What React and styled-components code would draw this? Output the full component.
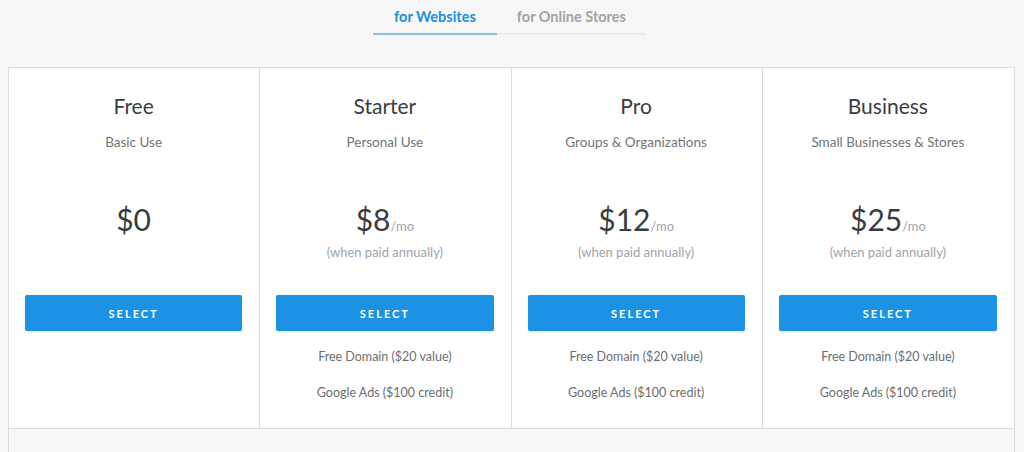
import styled, { createGlobalStyle } from "styled-components";

const plans = [
  { name: "Free", use: "Basic Use", price: "$0", monthly: false, features: [] },
  {
    name: "Starter",
    use: "Personal Use",
    price: "$8",
    monthly: true,
    features: ["Free Domain ($20 value)", "Google Ads ($100 credit)"],
  },
  {
    name: "Pro",
    use: "Groups & Organizations",
    price: "$12",
    monthly: true,
    features: ["Free Domain ($20 value)", "Google Ads ($100 credit)"],
  },
  {
    name: "Business",
    use: "Small Businesses & Stores",
    price: "$25",
    monthly: true,
    features: ["Free Domain ($20 value)", "Google Ads ($100 credit)"],
  },
];

const GlobalStyle = createGlobalStyle`
  body {
    margin: 0;
    background: #f7f7f7;
    font-family: Lato, "Open Sans", sans-serif;
    overflow: hidden;
  }
`;

const App = () => {
  return (
    <>
      <GlobalStyle />
      <Page>
        <Tabs>
          <Tab $active>for Websites</Tab>
          <Tab>for Online Stores</Tab>
        </Tabs>
        <Table>
          <PlanGrid>
            {plans.map((plan) => (
              <Plan key={plan.name}>
                <PlanName>{plan.name}</PlanName>
                <PlanUse>{plan.use}</PlanUse>
                <PriceBlock>
                  <Price>
                    {plan.price}
                    {plan.monthly && <PerMonth>/mo</PerMonth>}
                  </Price>
                  {plan.monthly && <PriceNote>(when paid annually)</PriceNote>}
                </PriceBlock>
                <SelectButton>Select</SelectButton>
                <Features>
                  {plan.features.map((f) => (
                    <Feature key={f}>{f}</Feature>
                  ))}
                </Features>
              </Plan>
            ))}
          </PlanGrid>
          <ExtraRow />
        </Table>
      </Page>
    </>
  );
};

const Page = styled.div`
  padding: 0 9px 0 8px;
`;

const Tabs = styled.div`
  display: flex;
  justify-content: center;
  padding-right: 4px;
  margin-bottom: 32px;
`;

const Tab = styled.div`
  height: 34px;
  padding: 0 ${(p) => (p.$active ? "21px" : "20px")};
  display: flex;
  align-items: center;
  padding-bottom: 1px;
  box-sizing: border-box;
  font-size: 14.5px;
  font-weight: 700;
  color: ${(p) => (p.$active ? "#1a8fe0" : "#a3a3a3")};
  border-bottom: ${(p) => (p.$active ? "2px solid #86c3ef" : "2px solid #ececec")};
  margin-top: 1px;
`;

const Table = styled.div`
  border: 1px solid #dcdcdc;
  border-bottom: none;
`;

const PlanGrid = styled.div`
  display: grid;
  grid-template-columns: repeat(4, 1fr);
  background: #fff;
  border-bottom: 1px solid #dcdcdc;
`;

const Plan = styled.div`
  display: flex;
  flex-direction: column;
  align-items: center;
  padding: 25px 17px 26px 16px;
  text-align: center;
  border-right: 1px solid #dcdcdc;

  &:last-child {
    border-right: none;
  }
`;

const PlanName = styled.div`
  font-size: 21px;
  line-height: 26px;
  color: #3a3d40;
`;

const PlanUse = styled.div`
  margin-top: 14px;
  font-size: 13.5px;
  line-height: 18px;
  color: #707478;
`;

const PriceBlock = styled.div`
  margin-top: 50px;
  height: 60px;
`;

const Price = styled.div`
  font-size: 30px;
  line-height: 36px;
  color: #3a3d40;
`;

const PerMonth = styled.span`
  font-size: 13px;
  line-height: 1;
  color: #a0a4a8;
`;

const PriceNote = styled.div`
  margin-top: 6px;
  font-size: 13px;
  line-height: 18px;
  color: #a0a4a8;
`;

const SelectButton = styled.button`
  margin-top: 34px;
  width: 100%;
  height: 36px;
  border: none;
  border-radius: 2px;
  background: #1b92e3;
  box-shadow: 0 1px 2px rgba(0, 0, 0, 0.12);
  color: #fff;
  font-family: inherit;
  font-size: 11px;
  font-weight: 700;
  letter-spacing: 2px;
  text-transform: uppercase;
`;

const Features = styled.div`
  margin-top: 17px;
  display: flex;
  flex-direction: column;
  gap: 18px;
  min-height: 54px;
`;

const Feature = styled.div`
  font-size: 12.5px;
  line-height: 18px;
  color: #6a6e72;
`;

const ExtraRow = styled.div`
  height: 23px;
  background: #f7f7f7;
`;

export default App;
